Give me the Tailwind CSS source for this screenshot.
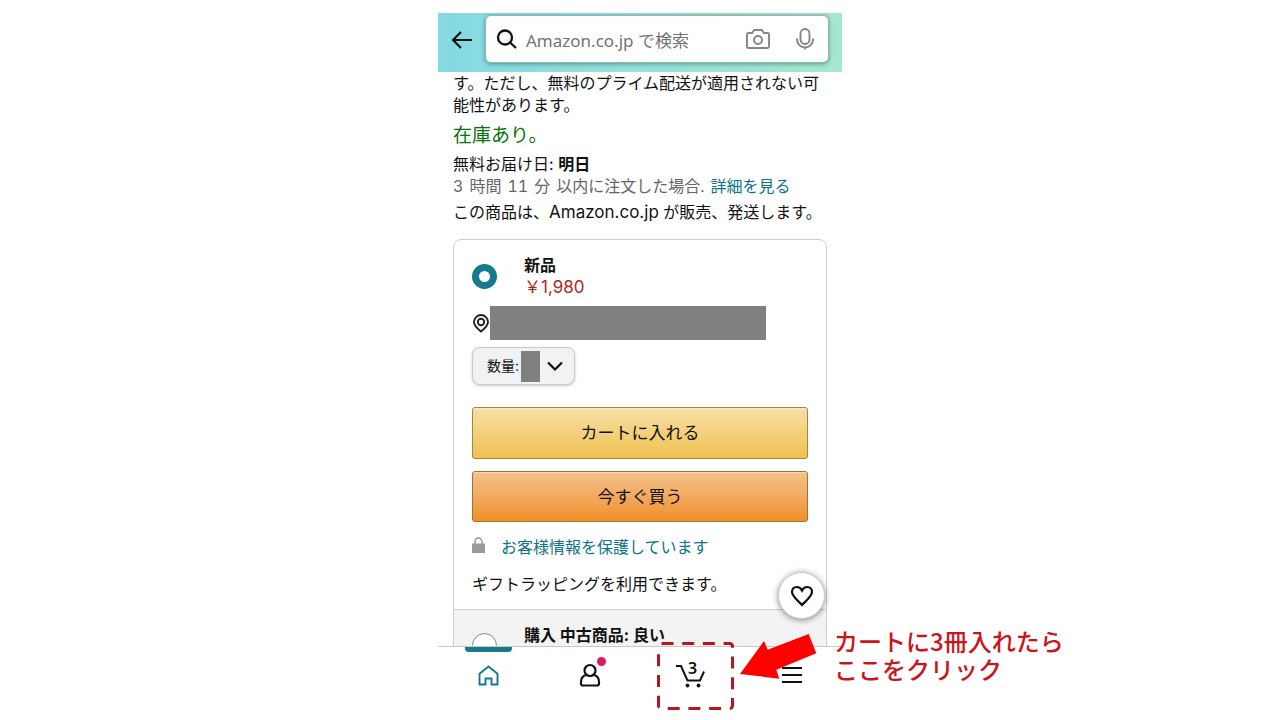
<!DOCTYPE html>
<html lang="ja">
<head>
<meta charset="utf-8">
<meta name="viewport" content="width=device-width, initial-scale=1">
<title>Amazon.co.jp</title>
<script src="https://cdn.jsdelivr.net/npm/@tailwindcss/browser@4"></script>
</head>
<body class="bg-white font-['Inter','Noto_Sans_CJK_JP',sans-serif] text-base leading-[22px] text-[#111]">
<div class="relative mx-auto flex h-screen w-full max-w-[404px] flex-col pt-[13px]">

  <header class="flex h-[59px] shrink-0 items-start bg-linear-to-r from-[#84d9e2] to-[#a6e7cf] pr-[13px] pt-[2px]">
    <button type="button" aria-label="戻る" class="flex h-[50px] w-[47px] shrink-0 items-center justify-center">
      <svg class="h-5 w-6" viewBox="0 0 24 20" fill="none" stroke="#111" stroke-width="2.200"><path d="M22 10H3M11 2 3 10l8 8"/></svg>
    </button>
    <form class="flex h-12 min-w-0 flex-1 items-center rounded-md border border-[#8fb5b5] bg-white px-[10px] shadow-[0_1px_4px_rgba(0,60,60,0.45)]">
      <svg class="size-[22px] shrink-0" viewBox="0 0 22 22" fill="none" stroke="#111" stroke-width="2.300"><circle cx="9" cy="9.500" r="7"/><path d="m14 14.500 6 5.500"/></svg>
      <input type="search" aria-label="検索" placeholder="Amazon.co.jp で検索" class="ml-2 min-w-0 flex-1 bg-transparent pt-1 font-['Noto_Sans','Noto_Sans_CJK_JP',sans-serif] text-[17px] leading-6 outline-none placeholder:text-[#737373]">
      <button type="button" aria-label="カメラ" class="shrink-0">
        <svg class="h-[22px] w-6" viewBox="0 0 24 22" fill="none" stroke="#858585" stroke-width="1.900"><path d="M2.500 5H6l2.200-3h7.600L18 5h3.500Q23 5 23 6.500v12Q23 20 21.500 20h-19Q1 20 1 18.500v-12Q1 5 2.500 5Z"/><circle cx="12" cy="12" r="4"/></svg>
      </button>
      <button type="button" aria-label="音声検索" class="ml-[26px] mr-1 shrink-0">
        <svg class="h-6 w-[18px]" viewBox="0 0 18 24" fill="none" stroke="#858585" stroke-width="1.900"><rect x="4.500" y="2" width="9" height="15" rx="4.500"/><path d="M1 11.500v1a8 8 0 0 0 16 0v-1M9 20.500V22.500"/></svg>
      </button>
    </form>
  </header>

  <main class="min-h-0 flex-1 overflow-hidden px-[15px]">
    <p>す。ただし、無料のプライム配送が適用されない可能性があります。</p>
    <p class="mt-[7px] text-[19px] leading-[26px] text-[#067306]">在庫あり。</p>
    <p class="mt-1">無料お届け日: <b>明日</b></p>
    <p class="flex gap-x-[6px] whitespace-nowrap tabular-nums text-[#666]"><span>3 </span><span>時間 </span><span>11 </span><span>分 </span><span>以内に注文した場合. </span><a href="#" class="text-[#0e7489]">詳細を見る</a></p>
    <p class="mt-1">この商品は、<span class="text-[17px]">Amazon.co.jp</span> が販売、発送します。</p>

    <section class="mt-4 overflow-hidden rounded-t-lg border border-[#cfd1d1]">
      <div class="px-[18px] pt-[14px]">
        <label class="flex items-center">
          <input type="radio" name="condition" checked class="size-[25px] shrink-0 appearance-none rounded-full border-[7px] border-[#16798d] bg-white">
          <span class="ml-[27px]"><b class="block">新品</b><span class="block text-[17px] text-[#b1261b]">￥1,980</span></span>
        </label>
        <div class="mt-2 flex items-center">
          <svg class="h-[19px] w-[18px] shrink-0" viewBox="0 0 18 19" fill="none" stroke="#222" stroke-width="1.900"><path d="M9 17.500C6 15 2 12 2 8a7 7 0 0 1 14 0c0 4-4 7-7 9.500Z"/><circle cx="9" cy="8" r="3.200"/></svg>
          <div class="h-[34px] w-[276px] bg-[#808080]"></div>
        </div>
        <button type="button" class="mt-[7px] flex h-[38px] items-center rounded-lg border border-[#c9cccc] bg-[#f0f2f4] pl-[14px] pr-[10px] text-sm shadow-[0_1px_3px_rgba(0,0,0,0.2)]">
          <span>数量:</span>
          <span class="ml-[2px] h-[31px] w-[19px] bg-[#808080]"></span>
          <svg class="ml-[6px] h-4 w-[18px]" viewBox="0 0 18 16" fill="none" stroke="#111" stroke-width="2.200"><path d="m2 4.500 7 7 7-7"/></svg>
        </button>
        <button type="button" class="mt-[22px] h-[52px] w-full rounded-[3px] border border-[#a08746] bg-linear-to-b from-[#f7dfa5] to-[#f0c14b] text-[17px] shadow-[inset_0_1px_0_rgba(255,255,255,0.4)]">カートに入れる</button>
        <button type="button" class="mt-3 h-[51px] w-full rounded-[3px] border border-[#a0713a] bg-linear-to-b from-[#f5c28a] to-[#ef9021] text-[17px] shadow-[inset_0_1px_0_rgba(255,255,255,0.4)]">今すぐ買う</button>
        <div class="mt-[14px] flex items-center">
          <svg class="mb-1 h-[17px] w-[13px] shrink-0" viewBox="0 0 13 17"><path d="M3 8V4.500a3.500 3.500 0 0 1 7 0V8" fill="none" stroke="#999" stroke-width="1.500"/><path d="M0 6.500h13V16H0z" fill="#999"/></svg>
          <a href="#" class="ml-4 text-[#0e7489]">お客様情報を保護しています</a>
        </div>
        <p class="mb-[14px] mt-[15px]">ギフトラッピングを利用できます。</p>
      </div>
      <label class="flex h-24 items-start border-t border-[#cfd1d1] bg-[#f3f3f3] px-[18px] pt-[14px]">
        <input type="radio" name="condition" class="mt-[9px] size-[25px] shrink-0 appearance-none rounded-full border border-[#888] bg-white">
        <b class="ml-[27px]">購入 中古商品: 良い</b>
      </label>
    </section>
  </main>

  <nav class="relative grid h-[74px] shrink-0 grid-cols-4 border-t border-[#c8c8c8] bg-white">
    <a href="#" aria-label="ホーム" class="relative flex justify-center pt-[18px]">
      <span class="absolute left-[27px] top-0 h-[5px] w-[47px] rounded-b bg-[#16798d]"></span>
      <svg class="h-[22px] w-6" viewBox="0 0 24 22" fill="none" stroke="#16798d" stroke-width="1.900"><path d="M2.500 8.800 11.500 1.500l9 7.300V19.500H14.500v-6h-6v6h-6Z"/></svg>
    </a>
    <a href="#" aria-label="アカウント" class="relative flex justify-center pt-4">
      <svg class="h-6 w-6" viewBox="0 0 24 24" fill="none" stroke="#111" stroke-width="2.200"><circle cx="12" cy="7.500" r="5.500"/><path d="M8 12C4.500 13 3 15.500 3 19v1.500Q3 22.500 5 22.500h14q2 0 2-2V19c0-3.500-1.500-6-5-7"/></svg>
      <span class="absolute left-[58px] top-[10px] size-[9px] rounded-full bg-[#e0185f]"></span>
    </a>
    <a href="#" aria-label="カート" class="relative flex justify-center pt-[14px]">
      <svg class="h-[27px] w-8" viewBox="0 0 32 27" fill="none" stroke="#111" stroke-width="2"><path d="M1 5h5l6.500 14.500h12.500l4-9"/><g fill="#111" stroke="none"><circle cx="12.500" cy="24.500" r="1.900"/><circle cx="23.500" cy="24.500" r="1.900"/></g></svg>
      <span class="absolute left-12 top-[10px] font-['Noto_Sans',sans-serif] text-base font-semibold leading-[22px]">3</span>
    </a>
    <a href="#" aria-label="メニュー" class="flex justify-center pt-5">
      <svg class="h-4 w-5" viewBox="0 0 20 16" stroke="#111" stroke-width="2"><path d="M0 1h20M0 8h20M0 15h20"/></svg>
    </a>
  </nav>

  <button type="button" aria-label="ほしい物リストに追加" class="absolute bottom-[101px] right-[17px] flex size-[47px] items-center justify-center rounded-full border border-[#ccc] bg-white shadow-[0_1px_6px_rgba(0,0,0,0.45)]">
    <svg class="h-[22px] w-6" viewBox="0 0 24 22" fill="none" stroke="#111" stroke-width="2.200"><path d="M12 20C8.500 16 2 11.500 2 7c0-3 2-5 4.800-5C9.200 2 11 3.500 12 5.500 13 3.500 14.800 2 17.200 2 20 2 22 4 22 7c0 4.500-6.500 9-10 13Z"/></svg>
  </button>

  <svg class="pointer-events-none absolute bottom-[8px] left-[217px] h-[72px] w-20" viewBox="0 0 80 72" fill="none" stroke="#b51622" stroke-width="3"><path d="M6.500 3.500H74.500Q77.500 3.500 77.500 6.500V65.500Q77.500 68.500 74.500 68.500H6.500Q3.500 68.500 3.500 65.500V6.500" stroke-dasharray="12 8.700"/></svg>
  <svg class="pointer-events-none absolute bottom-[39px] left-[301px] h-[50px] w-[80px]" viewBox="0 0 80 50"><path d="M1 43 25 10l3.700 8.700L69.700 3 77.300 22.300 37.300 38.700l3 9Z" fill="#f00"/></svg>
  <p class="absolute bottom-[37px] left-[396px] whitespace-nowrap font-['Noto_Sans_CJK_JP',sans-serif] text-2xl font-medium leading-7 text-[#cc141b]">カートに3冊入れたら<br>ここをクリック</p>
</div>
</body>
</html>
